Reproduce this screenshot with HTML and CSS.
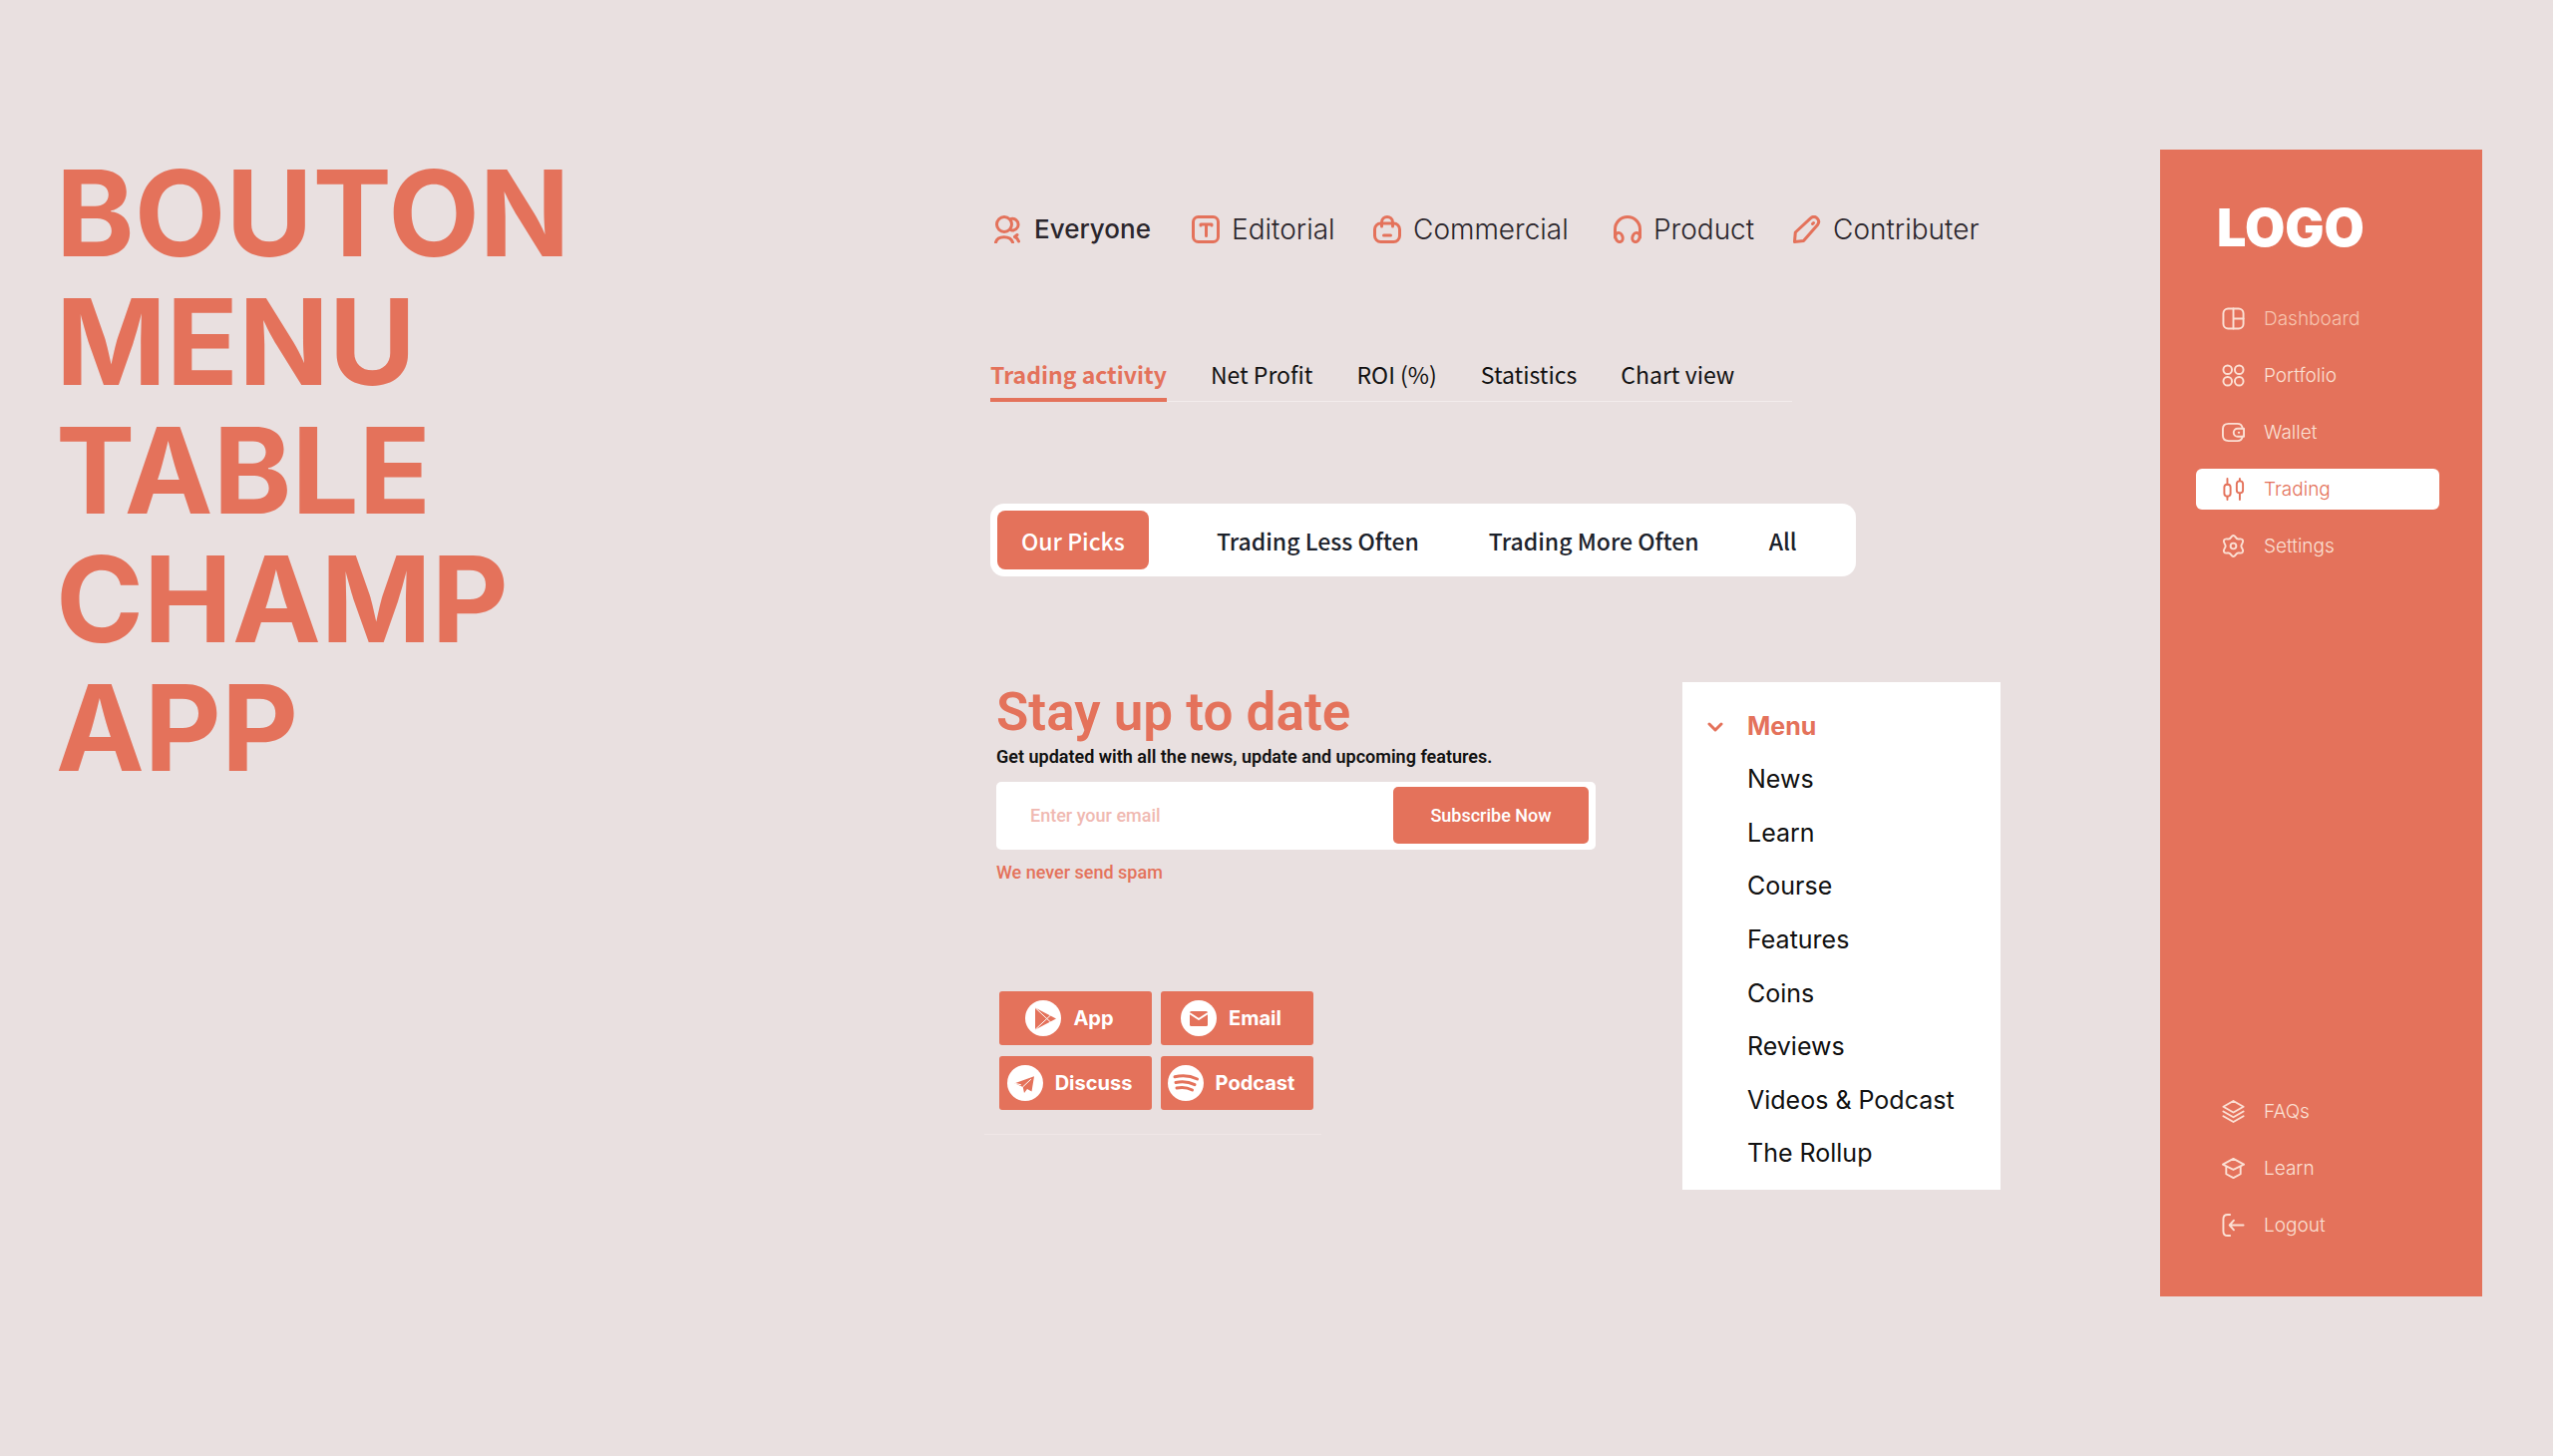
FILE: index.html
```html
<!DOCTYPE html>
<html lang="en">
<head>
  <meta charset="UTF-8" />
  <meta name="viewport" content="width=device-width, initial-scale=1.0" />
  <title>Bouton, menu, table, champ, app</title>
  <link rel="stylesheet" href="styles.css">
</head>
<body>

  <h1 class="headline">BOUTON<br>MENU<br>TABLE<br>CHAMP<br>APP</h1>

  <main class="content">
    <nav class="categories">
      <a href="#" class="active">
        <svg viewBox="0 0 28 28"><circle cx="10" cy="9" r="7.5"/><path d="M17 3.5a5.8 5.8 0 1 1 0 11.3M1.5 27c2-7 14.5-7 17 0M20.5 21.5c2 .8 3.300 2.500 4 4.500M20.500 21.500l2.500-2"/></svg>
        Everyone
      </a>
      <a href="#">
        <svg viewBox="0 0 28 28"><rect x="1.5" y="1.5" width="25" height="25" rx="5"/><path d="M9 10V9h11v1M14.5 9v11.5"/></svg>
        Editorial
      </a>
      <a href="#">
        <svg viewBox="0 0 28 28"><rect x="1.5" y="8" width="25" height="18.5" rx="6"/><path d="M8.5 11V7c0-7.3 11-7.3 11 0v4M10.5 20h7"/></svg>
        Commercial
      </a>
      <a href="#">
        <svg viewBox="0 0 28 28"><path d="M1.5 22v-8a12.5 12.5 0 0 1 25 0v8"/><ellipse cx="5.5" cy="22" rx="3.5" ry="4.7" transform="rotate(-20 5.5 22)"/><ellipse cx="22.5" cy="22" rx="3.5" ry="4.7" transform="rotate(20 22.5 22)"/></svg>
        Product
      </a>
      <a href="#">
        <svg viewBox="0 0 28 28"><path d="M1.5 26.5l.8-9.5L17.5 2.800c5-4 10.500 2.200 7 6.700L10.500 25.500zM19.500 8.500l1-1"/></svg>
        Contributer
      </a>
    </nav>

    <nav class="tabs">
      <a href="#" class="active">Trading activity</a>
      <a href="#">Net Profit</a>
      <a href="#">ROI (%)</a>
      <a href="#">Statistics</a>
      <a href="#">Chart view</a>
    </nav>

    <div class="picks">
      <button type="button" class="active">Our Picks</button>
      <button type="button">Trading Less Often</button>
      <button type="button">Trading More Often</button>
      <button type="button">All</button>
    </div>

    <div class="lower">
      <section class="left">
        <form class="newsletter">
          <h2>Stay up to date</h2>
          <label for="email">Get updated with all the news, update and upcoming features.</label>
          <div class="field">
            <input type="email" id="email" placeholder="Enter your email">
            <button type="submit">Subscribe Now</button>
          </div>
          <p>We never send spam</p>
        </form>

        <div class="channels">
          <a href="#">
            <svg viewBox="0 0 36 36"><circle class="disc" cx="18" cy="18" r="18"/><path class="ink" d="M10 7.5L31 18.5 10 29.5z"/><path class="crease" d="M10 7.5L25.5 22M10 29.5L25.5 15"/></svg>
            App
          </a>
          <a href="#">
            <svg viewBox="0 0 36 36"><circle class="disc" cx="18" cy="18" r="18"/><rect class="ink" x="9" y="11" width="18" height="15" rx="1.5"/><path class="crease thick" d="M9.5 13.5L18 19l8.5-5.5"/></svg>
            Email
          </a>
          <a href="#">
            <svg viewBox="0 0 36 36"><circle class="disc" cx="18" cy="18" r="18"/><path class="ink" d="M7.5 18.3L27 11.2 24.5 26.5 20 24l-3 4-1.300-6z"/><path class="crease" d="M15.7 21.8L23.5 14.5M8.5 18.5l5 1.200"/></svg>
            Discuss
          </a>
          <a href="#">
            <svg viewBox="0 0 36 36"><circle class="disc" cx="18" cy="18" r="18"/><path class="wave" d="M7 11.8c8-2 15.5-1.2 22.5 2.2M8 17.5c7-1.6 13-.8 19 2.2M9 23c5.5-1.2 10.500-.6 15.500 2"/></svg>
            Podcast
          </a>
        </div>
      </section>

      <nav class="dropdown">
        <svg class="chevron" viewBox="0 0 16 10"><path d="M2 2l6 6 6-6"/></svg>
        <ul>
          <li><a href="#" class="active">Menu</a></li>
          <li><a href="#">News</a></li>
          <li><a href="#">Learn</a></li>
          <li><a href="#">Course</a></li>
          <li><a href="#">Features</a></li>
          <li><a href="#">Coins</a></li>
          <li><a href="#">Reviews</a></li>
          <li><a href="#">Videos &amp; Podcast</a></li>
          <li><a href="#">The Rollup</a></li>
        </ul>
      </nav>
    </div>
  </main>

  <aside class="sidebar">
    <div class="logo">LOGO</div>
    <nav>
      <a href="#" class="muted">
        <svg viewBox="0 0 24 24"><rect x="1.5" y="1.5" width="21" height="21" rx="5"/><path d="M12 1.5v21M12 12h10.5"/></svg>
        Dashboard
      </a>
      <a href="#">
        <svg viewBox="0 0 24 24"><circle cx="6" cy="6" r="4.5"/><circle cx="18" cy="6" r="4.5"/><circle cx="6" cy="18" r="4.5"/><circle cx="18" cy="18" r="4.5"/></svg>
        Portfolio
      </a>
      <a href="#">
        <svg viewBox="0 0 24 24"><path d="M21.5 7.5C21 4 19.5 3 16 3H7C2.5 3 1 5 1 8.5v7C1 19.5 3 21 7 21h9c3.500 0 5-1 5.500-4.500"/><path d="M23 8v8.5h-6.500a4.200 4.200 0 0 1 0-8.500z"/><path d="M17.5 12.2h.5"/></svg>
        Wallet
      </a>
      <a href="#" class="active">
        <svg viewBox="0 0 24 24"><rect x="2.5" y="7" width="6.5" height="12.5" rx="3"/><path d="M5.7 1v6M5.7 19.5V23"/><rect x="15.5" y="3.5" width="6.5" height="12.5" rx="3"/><path d="M18.7 1v2.5M18.7 16v7"/></svg>
        Trading
      </a>
      <a href="#">
        <svg viewBox="0 0 24 24"><path d="M12 1c2.300 0 2.300 3.500 4.800 3.700 2 .2 3.700-1 5 1 1.400 2.500-1.600 3.800-1.600 6.300s3 3.800 1.600 6.300c-1.300 2-3 .8-5 1C14.300 19.500 14.300 23 12 23s-2.300-3.500-4.800-3.700c-2-.2-3.700 1-5-1C.8 15.800 3.800 14.500 3.800 12S.8 8.200 2.200 5.700c1.300-2 3-.8 5-1C9.700 4.500 9.700 1 12 1z"/><circle cx="12" cy="12" r="3"/></svg>
        Settings
      </a>
    </nav>
    <nav class="bottom">
      <a href="#">
        <svg viewBox="0 0 24 24"><path d="M12 1l10.5 6L12 13 1.5 7zM1.5 12L12 18l10.5-6M1.5 17L12 23l10.5-6"/></svg>
        FAQs
      </a>
      <a href="#">
        <svg viewBox="0 0 24 24"><path d="M12 2l11 6-11 5.500L1 8zM4.500 10v8l7.500 4 7.500-4v-8"/></svg>
        Learn
      </a>
      <a href="#">
        <svg viewBox="0 0 24 24"><path d="M8.5 1H6C3 1 1.500 2.500 1.500 5.500v13C1.500 21.500 3 23 6 23h2.500M22.500 12H8M12.500 7L8 12l4.500 5"/></svg>
        Logout
      </a>
    </nav>
  </aside>

</body>
</html>
```
FILE: styles.css
```css
* {
  box-sizing: border-box;
}

body {
  margin: 0;
  min-height: 100vh;
  padding: 150px 71px 160px 56px;
  display: grid;
  grid-template-columns: minmax(0, 777fr) minmax(0, 1013fr) 323px;
  column-gap: 160px;
  background: #e9e0e0;
  color: #111;
  font-family: Inter, sans-serif;
}

h1, h2, p, ul {
  margin: 0;
  padding: 0;
}

a {
  color: inherit;
  text-decoration: none;
}

button {
  border: none;
  background: none;
  cursor: pointer;
}

svg {
  flex: none;
  fill: none;
  stroke: currentColor;
  stroke-linecap: round;
  stroke-linejoin: round;
}

.headline {
  font-size: 119px;
  font-weight: 700;
  line-height: 129px;
  color: #e4725b;
}

.content {
  padding-top: 60px;
}

/* categories */
.categories {
  display: grid;
  grid-template-columns: 198px 182px 241px 180px auto;
  padding-left: 4px;
  line-height: 40px;
  font-size: 28px;
  font-weight: 300;
  color: #2b262c;
  white-space: nowrap;
}

.categories a {
  display: flex;
  align-items: center;
  gap: 12px;
}

.categories .active {
  font-size: 26px;
  font-weight: 500;
}

.categories svg {
  width: 28px;
  height: 28px;
  stroke: #e4725b;
  stroke-width: 3;
}

/* tabs */
.tabs {
  display: flex;
  gap: 44px;
  max-width: 804px;
  margin-top: 105px;
  border-bottom: 1px solid #f3ecec;
  font-family: "Noto Sans CJK JP", sans-serif;
  font-size: 23px;
  line-height: 40px;
  white-space: nowrap;
}

.tabs a {
  padding-bottom: 4px;
}

.tabs .active {
  margin-bottom: -1px;
  border-bottom: 4px solid #e4725b;
  color: #e4725b;
  font-weight: 700;
}

/* picks */
.picks {
  display: flex;
  gap: 22px;
  max-width: 868px;
  margin-top: 102px;
  padding: 7px;
  background: #fff;
  border-radius: 14px;
}

.picks button {
  height: 59px;
  padding: 0 24px;
  border-radius: 8px;
  color: #1c222b;
  font-family: "Noto Sans CJK JP", sans-serif;
  font-size: 23px;
  font-weight: 500;
  white-space: nowrap;
}

.picks .active {
  margin-right: 22px;
  background: #e4725b;
  color: #fff;
}

.lower {
  display: flex;
  justify-content: space-between;
  align-items: flex-start;
  margin-top: 106px;
}

.left {
  flex: 0 1 607px;
  padding-left: 6px;
}

/* newsletter */
.newsletter {
  font-family: Roboto, sans-serif;
  font-size: 18px;
  line-height: 30px;
  font-weight: 500;
  color: #e4725b;
}

.newsletter h2 {
  font-size: 53px;
  line-height: 60px;
  font-weight: 600;
}

.newsletter label {
  display: block;
  color: #111;
  font-weight: 600;
}

.field {
  display: flex;
  height: 68px;
  margin: 10px 0 8px;
  padding: 5px 7px 6px 0;
  background: #fff;
  border-radius: 5px;
}

.field input {
  flex: 1;
  min-width: 0;
  padding: 0 34px;
  border: none;
  background: none;
  font: inherit;
}

.field input::placeholder {
  color: #f0b9b2;
  opacity: 1;
}

.field button {
  width: 196px;
  border-radius: 5px;
  background: #e4725b;
  color: #fff;
  font: inherit;
}

/* channel buttons */
.channels {
  display: grid;
  grid-template-columns: 153px 153px;
  gap: 11px 9px;
  width: 338px;
  margin: 104px 0 0 -12px;
  padding: 0 0 24px 15px;
  border-bottom: 1px solid #f0e7e7;
}

.channels a {
  display: flex;
  align-items: center;
  justify-content: center;
  gap: 12px;
  height: 54px;
  padding-right: 12px;
  border-radius: 3px;
  background: #e4725b;
  color: #fff;
  font-size: 20px;
  font-weight: 700;
}

.channels svg {
  width: 36px;
  height: 36px;
}

.channels .disc {
  fill: #fff;
  stroke: none;
}

.channels .ink {
  fill: #e4725b;
  stroke: none;
}

.channels .crease {
  stroke: #fff;
  stroke-width: 1;
}

.channels .thick {
  stroke-width: 2;
}

.channels .wave {
  stroke: #e4725b;
  stroke-width: 3;
}

/* dropdown */
.dropdown {
  display: flex;
  gap: 24px;
  width: 319px;
  padding: 17px 0 10px 25px;
  background: #fff;
  font-size: 25px;
}

.dropdown .chevron {
  width: 16px;
  height: 10px;
  margin-top: 23px;
  stroke: #e4725b;
  stroke-width: 3;
}

.dropdown ul {
  display: grid;
  grid-auto-rows: 1fr;
  align-items: center;
  height: 482px;
  list-style: none;
  white-space: nowrap;
}

.dropdown .active {
  color: #e4725b;
  font-weight: 700;
}

/* sidebar */
.sidebar {
  display: flex;
  flex-direction: column;
  padding: 49px 43px 51px 36px;
  background: #e4725b;
  color: #fbe0d4;
  font-size: 19px;
  font-weight: 300;
}

.logo {
  margin-bottom: 40px;
  padding-left: 21px;
  color: #fff;
  font-size: 52px;
  line-height: 60px;
  font-weight: 900;
}

.sidebar nav {
  display: grid;
  gap: 16px;
}

.sidebar a {
  display: flex;
  align-items: center;
  gap: 19px;
  height: 41px;
  padding-left: 26px;
  border-radius: 6px;
}

.sidebar svg {
  width: 23px;
  height: 23px;
  stroke-width: 2;
}

.sidebar .muted {
  color: #f7c3ae;
}

.sidebar .muted svg {
  color: #fbe0d4;
}

.sidebar .active {
  background: #fff;
  color: #e4725b;
}

.sidebar .bottom {
  margin-top: auto;
}
```
